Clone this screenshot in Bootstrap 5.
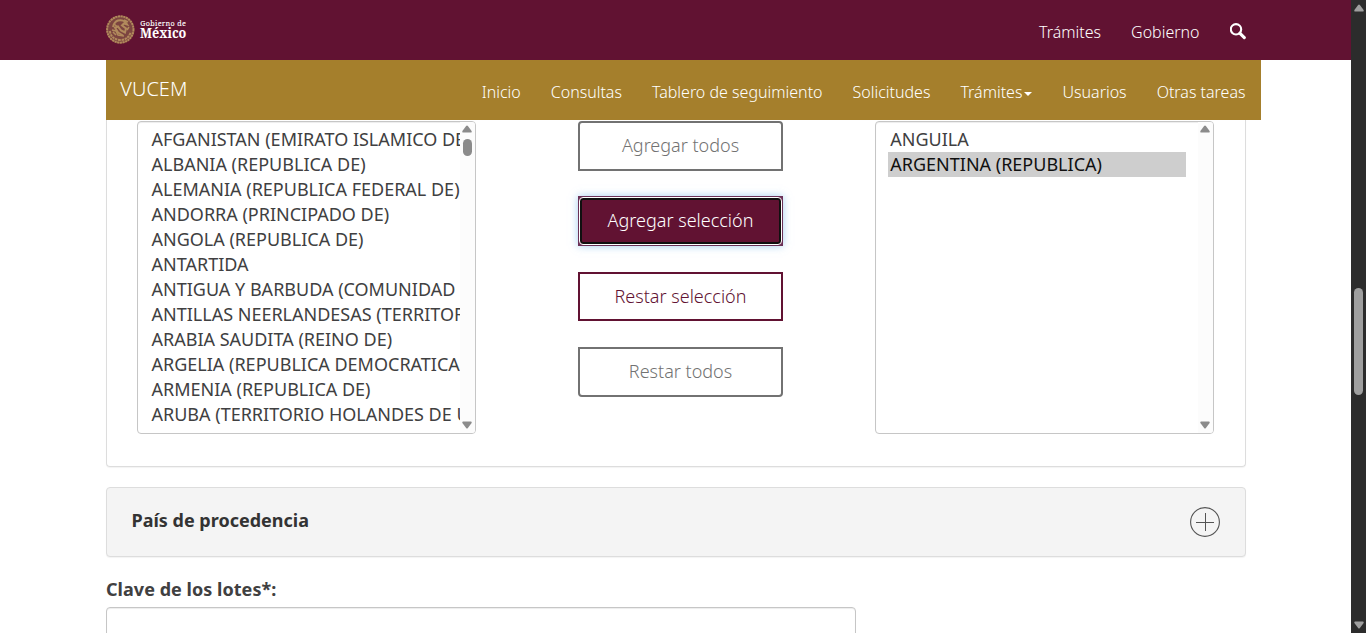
<!DOCTYPE html>
<html lang="es">
<head>
<meta charset="utf-8">
<meta name="viewport" content="width=device-width, initial-scale=1">
<title>VUCEM</title>
<link href="https://cdn.jsdelivr.net/npm/bootstrap@5.3.0/dist/css/bootstrap.min.css" rel="stylesheet">
<style>
  body { font-family: "Noto Sans", "Open Sans", sans-serif; font-size: 18px; line-height: 25px; color: #404041; background: #fff; }
  .screen { height: 633px; }
  .wrap { width: 1140px; margin-left: 106px; }
  .gob-bar { height: 60px; background: #611232; }
  .gob-bar .wrap { height: 60px; }
  .vucem-bar { width: 1155px; height: 60px; margin-left: 106px; padding: 0 15.5px 0 14.300px; background: #a57f2c; }
  .thin-link { font-size: 16px; font-weight: 300; line-height: 24px; color: #fff; text-decoration: none; white-space: nowrap; }
  .brand { font-size: 20px; font-weight: 300; line-height: 24px; color: #fff; text-decoration: none; padding-top: 17px; }
  .menu { gap: 30px; padding-top: 20px; }
  .caret { display: inline-block; border: 4px solid transparent; border-top-color: #fff; border-bottom: 0; margin-left: 2px; vertical-align: 2px; }
  .panel-open { height: 347px; border: 1px solid #ddd; border-top: 0; border-radius: 0 0 4px 4px; box-shadow: 0 1px 1px rgba(0,0,0,.05); padding: 1px 31px 0 30px; }
  .pick { width: 339px; height: 313px; border: 1px solid #c6c6c6; border-radius: 4px; box-shadow: inset 0 1px 1px rgba(0,0,0,.075); overflow: hidden; }
  .opts { padding: 5px 0 0 12px; overflow: hidden; }
  .opts li { height: 25px; padding-left: 1.500px; white-space: nowrap; }
  .opts.inset-end { padding-right: 12px; }
  .opts.inset-end li { padding-left: 2.300px; }
  .opts .chosen { background: #cecece; color: #101010; }
  .track { width: 15px; background: #fcfcfc; padding: 3px 1px 4px 0; flex: none; }
  .track .thumb { width: 9px; height: 17px; border-radius: 5px; background: #8b8b8b; margin-top: 6px; }
  .actions { width: 205px; gap: 25.6px; margin-left: 10px; }
  .act { height: 49.7px; border: 2px solid #611232; border-radius: 0; padding: 0; color: #611232; background: #fff; font-size: 18px; font-weight: 300; line-height: 25px; }
  .act.idle { border-color: #727272; color: #727272; }
  .act.current { position: relative; padding-bottom: 1px; color: #fff; background: #611232; box-shadow: 0 0 8px rgba(102,175,233,.6); border-color: #6b3157; }
  .act.current::before { content: ""; position: absolute; inset: -1px; border: 1px solid #fff; border-radius: 4px; box-shadow: inset 0 0 0 2px #101010; }
  .panel-shut { height: 70px; margin-top: 20px; border: 1px solid #ddd; border-radius: 4px; background: #f4f4f4; box-shadow: 0 1px 1px rgba(0,0,0,.05); padding: 0 25px 0 24.500px; }
  .panel-shut h4 { font-size: 18px; font-weight: 700; line-height: 25px; color: #333; margin: 0 0 3px; }
  .field-label { display: block; font-weight: 700; line-height: 25px; margin-top: 20px; letter-spacing: .04px; }
  .lotes { width: 750px; height: 51px; margin-top: 5px; border: 1px solid #c6c6c6; border-radius: 4px; box-shadow: inset 0 1px 1px rgba(0,0,0,.075); padding: 6px 14px; }
  .page-track { width: 15px; background: #2c2c2c; padding: 4px 0; }
  .page-track .thumb { width: 9px; height: 107px; border-radius: 5px; background: #9f9f9f; margin-top: 276px; }
</style>
</head>
<body>
<svg class="d-none">
  <symbol id="up" viewBox="0 0 10 8"><path d="M4.100.9q.9-1 1.800 0L9.600 6q.4 1.500-.8 1.500H1.200Q0 7.500.4 6z"/></symbol>
  <symbol id="down" viewBox="0 0 10 8"><path d="M4.100 7.100q.9 1 1.800 0L9.600 2Q10 .500 8.800.500H1.200Q0 .500.4 2z"/></symbol>
</svg>
<div class="screen d-flex overflow-hidden">
  <div class="flex-grow-1 overflow-hidden">
    <header class="gob-bar">
      <div class="wrap d-flex justify-content-between">
        <a href="#" aria-label="Gobierno de México">
          <svg class="d-block" width="84" height="60" viewBox="0 0 84 60">
            <circle cx="14.300" cy="29.500" r="13.500" fill="#7c4540"/>
            <g fill="none" stroke="#b18a5c">
              <circle cx="14.300" cy="29.500" r="13.200" stroke-width="2" stroke-dasharray="2.200 .5"/>
              <path d="M3.800 31q1.500 8.500 10.500 9 8 0 10.500-8" stroke-width="2" stroke-dasharray="2.500 .7"/>
              <path d="M7 27q1-5 5-6.500 4-1 7 1l2 3-3-1-2 2 4 3-1 4-4-2-3-4-3 1 3 5 5 3" stroke-width="2"/>
              <path d="M6 30l4 1 2 4 6 1M8 24l5 4M10 35l-3-3M18 20l4 2M21 30l2-3" stroke-width="1.500"/>
            </g>
            <g fill="#fff" font-family="'Noto Serif','Liberation Serif',serif">
              <text x="34.300" y="26" font-size="7.200" textLength="45.500" stroke="#fff" stroke-width=".1">Gobierno de</text>
              <text x="34" y="38" font-size="13.500" font-weight="700" textLength="46.300" lengthAdjust="spacingAndGlyphs">México</text>
            </g>
          </svg>
        </a>
        <nav class="menu d-flex">
          <a class="thin-link" href="#">Trámites</a>
          <a class="thin-link" href="#">Gobierno</a>
          <a href="#" aria-label="Buscar"><svg class="d-block" width="16.500" height="22" viewBox="0 0 16.500 22"><g fill="none" stroke="#fff"><circle cx="6" cy="9.300" r="5.200" stroke-width="2.100"/><path d="M10 13.300l4.300 4.300" stroke-width="3.100" stroke-linecap="round"/></g></svg></a>
        </nav>
      </div>
    </header>
    <div class="vucem-bar d-flex justify-content-between">
      <a class="brand" href="#">VUCEM</a>
      <nav class="menu d-flex">
        <a class="thin-link" href="#">Inicio</a>
        <a class="thin-link" href="#">Consultas</a>
        <a class="thin-link" href="#">Tablero de seguimiento</a>
        <a class="thin-link" href="#">Solicitudes</a>
        <a class="thin-link" href="#">Trámites<span class="caret"></span></a>
        <a class="thin-link" href="#">Usuarios</a>
        <a class="thin-link" href="#">Otras tareas</a>
      </nav>
    </div>
    <main class="wrap">
      <section class="panel-open d-flex justify-content-between align-items-start">
        <div class="pick d-flex">
          <ul class="opts list-unstyled mb-0 flex-grow-1">
            <li>AFGANISTAN (EMIRATO ISLAMICO DE)</li>
            <li>ALBANIA (REPUBLICA DE)</li>
            <li>ALEMANIA (REPUBLICA FEDERAL DE)</li>
            <li>ANDORRA (PRINCIPADO DE)</li>
            <li>ANGOLA (REPUBLICA DE)</li>
            <li>ANTARTIDA</li>
            <li>ANTIGUA Y BARBUDA (COMUNIDAD</li>
            <li>ANTILLAS NEERLANDESAS (TERRITORIO</li>
            <li>ARABIA SAUDITA (REINO DE)</li>
            <li>ARGELIA (REPUBLICA DEMOCRATICA</li>
            <li>ARMENIA (REPUBLICA DE)</li>
            <li>ARUBA (TERRITORIO HOLANDES DE U</li>
          </ul>
          <div class="track d-flex flex-column align-items-center">
            <svg width="10" height="8" fill="#8b8b8b"><use href="#up"/></svg>
            <div class="thumb"></div>
            <svg class="mt-auto" width="10" height="8" fill="#8b8b8b"><use href="#down"/></svg>
          </div>
        </div>
        <div class="actions d-flex flex-column">
          <button class="btn act idle rounded-top-1" type="button">Agregar todos</button>
          <button class="btn act current" type="button">Agregar selección</button>
          <button class="btn act" type="button">Restar selección</button>
          <button class="btn act idle rounded-bottom-1" type="button">Restar todos</button>
        </div>
        <div class="pick d-flex">
          <ul class="opts inset-end list-unstyled mb-0 flex-grow-1">
            <li>ANGUILA</li>
            <li class="chosen">ARGENTINA (REPUBLICA)</li>
          </ul>
          <div class="track d-flex flex-column align-items-center">
            <svg width="10" height="8" fill="#8b8b8b"><use href="#up"/></svg>
            <svg class="mt-auto" width="10" height="8" fill="#8b8b8b"><use href="#down"/></svg>
          </div>
        </div>
      </section>
      <section class="panel-shut d-flex justify-content-between align-items-center">
        <h4>País de procedencia</h4>
        <svg width="30" height="30" viewBox="0 0 30 30" fill="none" stroke="#545454"><circle cx="15" cy="15" r="14.400" stroke-width="1.100"/><path d="M15.500 6v18M6 15.500h18"/></svg>
      </section>
      <label class="field-label" for="lotes">Clave de los lotes*:</label>
      <input class="lotes d-block" id="lotes" type="text">
    </main>
  </div>
  <div class="page-track d-flex flex-column align-items-center flex-shrink-0">
    <svg width="10" height="8" fill="#9f9f9f"><use href="#up"/></svg>
    <div class="thumb"></div>
    <svg class="mt-auto" width="10" height="8" fill="#9f9f9f"><use href="#down"/></svg>
  </div>
</div>
<script src="https://cdn.jsdelivr.net/npm/bootstrap@5.3.0/dist/js/bootstrap.bundle.min.js"></script>
</body>
</html>
